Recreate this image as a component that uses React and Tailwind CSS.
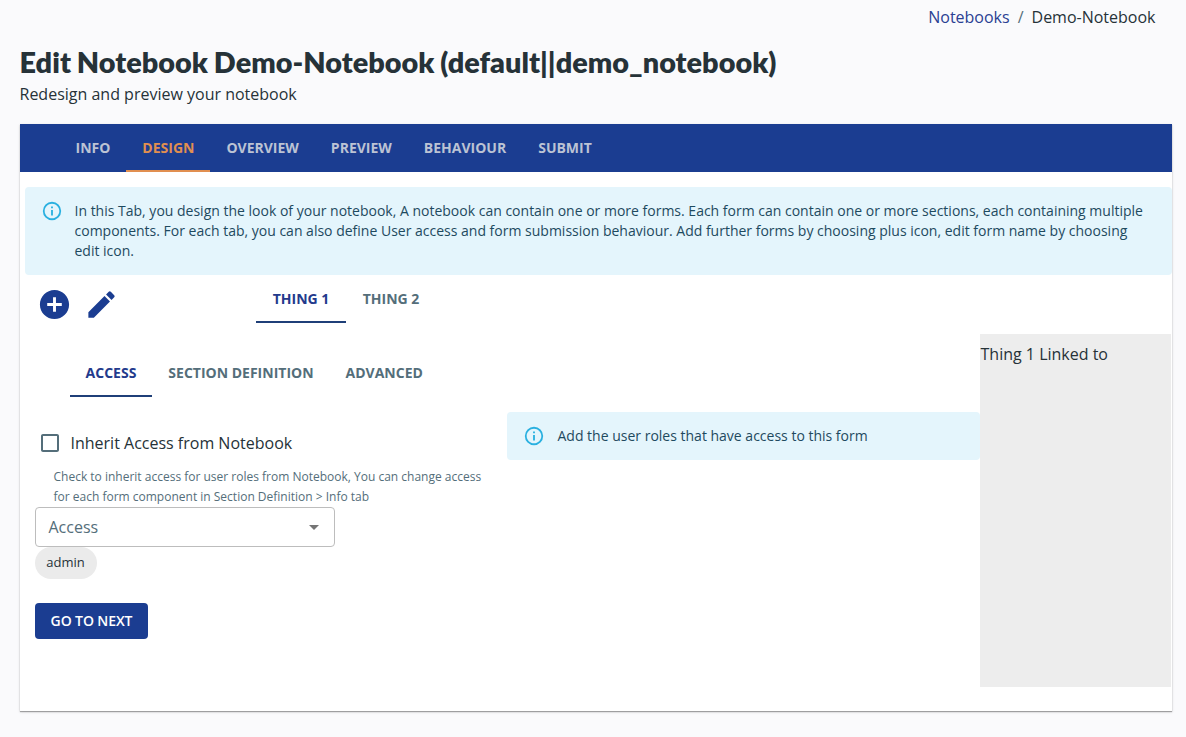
import { MdAddCircle, MdEdit, MdArrowDropDown, MdCheckBoxOutlineBlank } from "react-icons/md";

function InfoIcon() {
  return (
    <svg viewBox="0 0 24 24" className="size-[22px] shrink-0 fill-[#29b0e0]">
      <path d="M11,9H13V7H11M12,20C7.59,20 4,16.41 4,12C4,7.59 7.59,4 12,4C16.41,4 20,7.59 20,12C20,16.41 16.41,20 12,20M12,2A10,10 0 0,0 2,12A10,10 0 0,0 12,22A10,10 0 0,0 22,12A10,10 0 0,0 12,2M11,17H13V11H11V17Z" />
    </svg>
  );
}

function Alert({ children, className }) {
  return (
    <div className={`flex rounded bg-[#e4f5fc] px-4 py-[13px] text-sm text-[#1e4a5f] ${className}`}>
      <InfoIcon />
      <p className="pt-px pr-2 leading-5">{children}</p>
    </div>
  );
}

function Tabs({ items, active, activeClass, idleClass, className }) {
  return (
    <div className={`flex text-sm font-bold uppercase ${className}`}>
      {items.map((label) => (
        <button
          key={label}
          className={`flex h-12 items-center justify-center border-b-2 px-4 pt-0.5 uppercase whitespace-nowrap ${label === active ? activeClass : idleClass}`}
        >
          {label}
        </button>
      ))}
    </div>
  );
}

export default function App() {
  const lightActive = "border-[#1f3f78] text-[#233a8c]";
  const lightIdle = "border-transparent text-[#546e7a]";
  return (
    <div className="flex h-[737px] w-[1186px] flex-col overflow-hidden bg-[#fafafc] pr-[14px] pl-5 font-['Open_Sans',sans-serif] text-base text-[#263238]">
      <nav className="flex h-[34px] justify-end gap-2 pt-[5px] pr-[16.5px] leading-6">
        <a className="text-[#2a4093]">Notebooks</a>
        <span className="text-[#546e7a]">/</span>
        <span>Demo-Notebook</span>
      </nav>
      <header className="h-[90px] pt-[9px]">
        <h1 className="-ml-[0.5px] pb-px font-['Lato',sans-serif] text-[28.8px] leading-[38px] font-extrabold tracking-[0.03px] [word-spacing:-0.8px]">
          Edit Notebook Demo-Notebook (default||demo_notebook)
        </h1>
        <p className="-ml-[0.5px] leading-6">Redesign and preview your notebook</p>
      </header>

      <main className="flex h-[587px] flex-col bg-white shadow-[0_1px_1px_#00000050,0_1px_3px_#0000001f]">
        <Tabs
          items={["Info", "Design", "Overview", "Preview", "Behaviour", "Submit"]}
          active="Design"
          activeClass="border-[#e18f50] text-[#e18f50]"
          idleClass="border-transparent text-[#bcc3d4]"
          className="h-12 bg-[#1b3d91] pl-[39.5px]"
        />
        <Alert className="mt-[15px] ml-[5px] h-[88px] shrink-0 gap-[11.5px]">
          In this Tab, you design the look of your notebook, A notebook can contain one or more forms. Each form can
          contain one or more sections, each containing multiple components. For each tab, you can also define User
          access and form submission behaviour. Add further forms by choosing plus icon, edit form name by choosing edit
          icon.
        </Alert>

        <div className="flex h-[59px] shrink-0">
          <div className="flex w-[236px] gap-3 pt-3 pl-[17px] text-[#1b3d91]">
            <MdAddCircle className="size-[35px]" />
            <MdEdit className="size-[35px]" />
          </div>
          <Tabs
            items={["Thing 1", "Thing 2"]}
            active="Thing 1"
            activeClass={lightActive}
            idleClass={lightIdle}
            className="[&>button]:min-w-[90px]"
          />
        </div>

        <div className="flex">
          <section className="w-[487px] pl-[15px]">
            <Tabs
              items={["Access", "Section Definition", "Advanced"]}
              active="Access"
              activeClass={lightActive}
              idleClass={lightIdle}
              className="mt-[15px] pl-[34.6px]"
            />
            <label className="mt-[34px] flex h-6 items-center gap-[8.5px] pl-[3px]">
              <MdCheckBoxOutlineBlank className="size-6 text-[#546e7a]" />
              Inherit Access from Notebook
            </label>
            <p className="mt-3 ml-[18.5px] w-[445px] text-xs leading-5 text-[#546e7a]">
              Check to inherit access for user roles from Notebook, You can change access for each form component in
              Section Definition &gt; Info tab
            </p>
            <div className="flex h-10 w-[300px] items-center justify-between rounded border border-[#bdbdbd] pr-2 pl-[12.5px] text-[#546e7a]">
              Access
              <MdArrowDropDown className="size-6 text-[#757575]" />
            </div>
            <div className="flex h-8 w-[62px] items-center justify-center rounded-full bg-[#ebebeb] pr-px text-[13px]">
              admin
            </div>
            <button className="mt-6 flex h-9 w-[113px] items-center justify-center rounded bg-[#1b3d91] text-sm font-semibold tracking-[-0.1px] text-white">
              GO TO NEXT
            </button>
          </section>
          <Alert className="mt-[78px] h-12 w-[473px] gap-[12.5px]">
            Add the user roles that have access to this form
          </Alert>
          <aside className="h-[353px] w-[191px] bg-[#ededed] pt-2 pl-[0.5px] leading-6">Thing 1 Linked to</aside>
        </div>
      </main>
    </div>
  );
}
